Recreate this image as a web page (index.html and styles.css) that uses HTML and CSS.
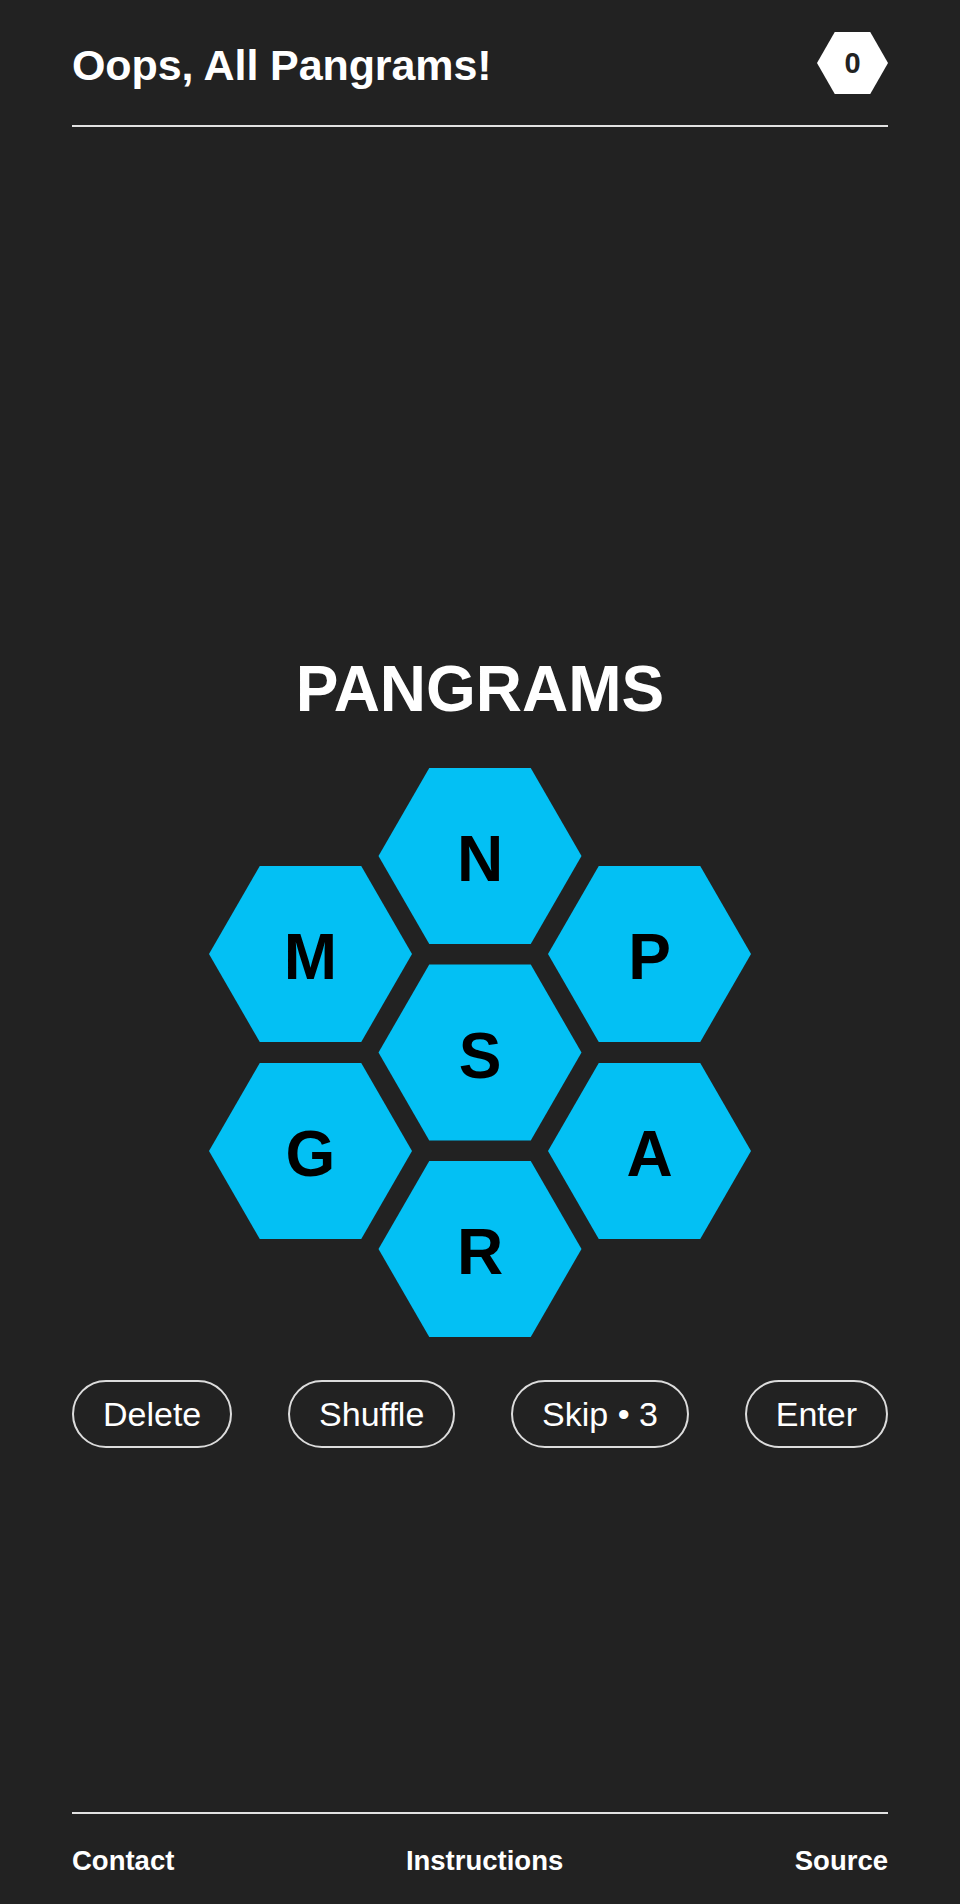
FILE: index.html
```html
<!DOCTYPE html>
<html lang="en">
<head>
<meta charset="utf-8">
<title>Oops, All Pangrams!</title>
<link rel="stylesheet" href="styles.css">
</head>
<body>
<div class="page">
  <header class="header">
    <h1 class="site-title">Oops, All Pangrams!</h1>
    <div class="score"><span>0</span></div>
  </header>

  <main class="game">
    <h2 class="word">PANGRAMS</h2>
    <svg class="board" width="542" height="569" viewBox="0 0 542 569" aria-label="letters">
      <g class="cell">
        <polygon points="169.5,88 220.25,0 321.75,0 372.5,88 321.75,176 220.25,176"/>
        <text x="271" y="113">N</text>
      </g>
      <g class="cell">
        <polygon points="0,186 50.75,98 152.25,98 203,186 152.25,274 50.75,274"/>
        <text x="101.5" y="211">M</text>
      </g>
      <g class="cell">
        <polygon points="339,186 389.75,98 491.25,98 542,186 491.25,274 389.75,274"/>
        <text x="440.5" y="211">P</text>
      </g>
      <g class="cell">
        <polygon points="169.5,284.5 220.25,196.5 321.75,196.5 372.5,284.5 321.75,372.5 220.25,372.5"/>
        <text x="271" y="309.5">S</text>
      </g>
      <g class="cell">
        <polygon points="0,383 50.75,295 152.25,295 203,383 152.25,471 50.75,471"/>
        <text x="101.5" y="408">G</text>
      </g>
      <g class="cell">
        <polygon points="339,383 389.75,295 491.25,295 542,383 491.25,471 389.75,471"/>
        <text x="440.5" y="408">A</text>
      </g>
      <g class="cell">
        <polygon points="169.5,481 220.25,393 321.75,393 372.5,481 321.75,569 220.25,569"/>
        <text x="271" y="506">R</text>
      </g>
    </svg>
    <div class="controls">
      <button class="btn">Delete</button>
      <button class="btn">Shuffle</button>
      <button class="btn">Skip • 3</button>
      <button class="btn">Enter</button>
    </div>
  </main>

  <footer class="footer">
    <a class="foot-link" href="#">Contact</a>
    <a class="foot-link" href="#">Instructions</a>
    <a class="foot-link" href="#">Source</a>
  </footer>
</div>
</body>
</html>
```

FILE: styles.css
```css
html, body {
  margin: 0;
  padding: 0;
  background: #222222;
}

body {
  font-family: "Liberation Sans", Arial, Helvetica, sans-serif;
  color: #ffffff;
}

.page {
  min-height: 1904px;
  box-sizing: border-box;
  padding: 0 72px;
  display: flex;
  flex-direction: column;
}

.header {
  display: flex;
  align-items: center;
  justify-content: space-between;
  padding: 32px 0 31px;
  border-bottom: 2px solid #e2e2e2;
}

.site-title {
  margin: 4px 0 0;
  font-size: 43px;
  font-weight: 700;
  letter-spacing: -0.1px;
}

.score {
  width: 71px;
  height: 62px;
  background: #ffffff;
  clip-path: polygon(25% 0, 75% 0, 100% 50%, 75% 100%, 25% 100%, 0 50%);
  display: flex;
  align-items: center;
  justify-content: center;
  color: #222222;
  font-size: 29px;
  font-weight: 700;
}

.game {
  display: flex;
  flex-direction: column;
  align-items: center;
  padding-top: 530px;
}

.word {
  margin: 0;
  font-size: 64px;
  line-height: 64px;
  font-weight: 700;
  letter-spacing: 0;
}

.board {
  display: block;
  margin-top: 47px;
}

.cell polygon {
  fill: #03c0f4;
}

.cell text {
  font-family: "Liberation Sans", Arial, Helvetica, sans-serif;
  font-size: 64px;
  font-weight: 700;
  fill: #000000;
  text-anchor: middle;
}

.controls {
  align-self: stretch;
  display: flex;
  justify-content: space-between;
  margin-top: 43px;
}

.btn {
  height: 68px;
  box-sizing: border-box;
  padding: 0 29px;
  border: 2px solid #dcdcdc;
  border-radius: 34px;
  background: transparent;
  color: #ffffff;
  font-family: "Liberation Sans", Arial, Helvetica, sans-serif;
  font-size: 34px;
  font-weight: 400;
}

.footer {
  margin-top: auto;
  border-top: 2px solid #e2e2e2;
  padding: 31px 0 27px;
  display: flex;
  justify-content: space-between;
}

.foot-link {
  color: #ffffff;
  text-decoration: none;
  font-size: 27.5px;
  font-weight: 700;
}
```
